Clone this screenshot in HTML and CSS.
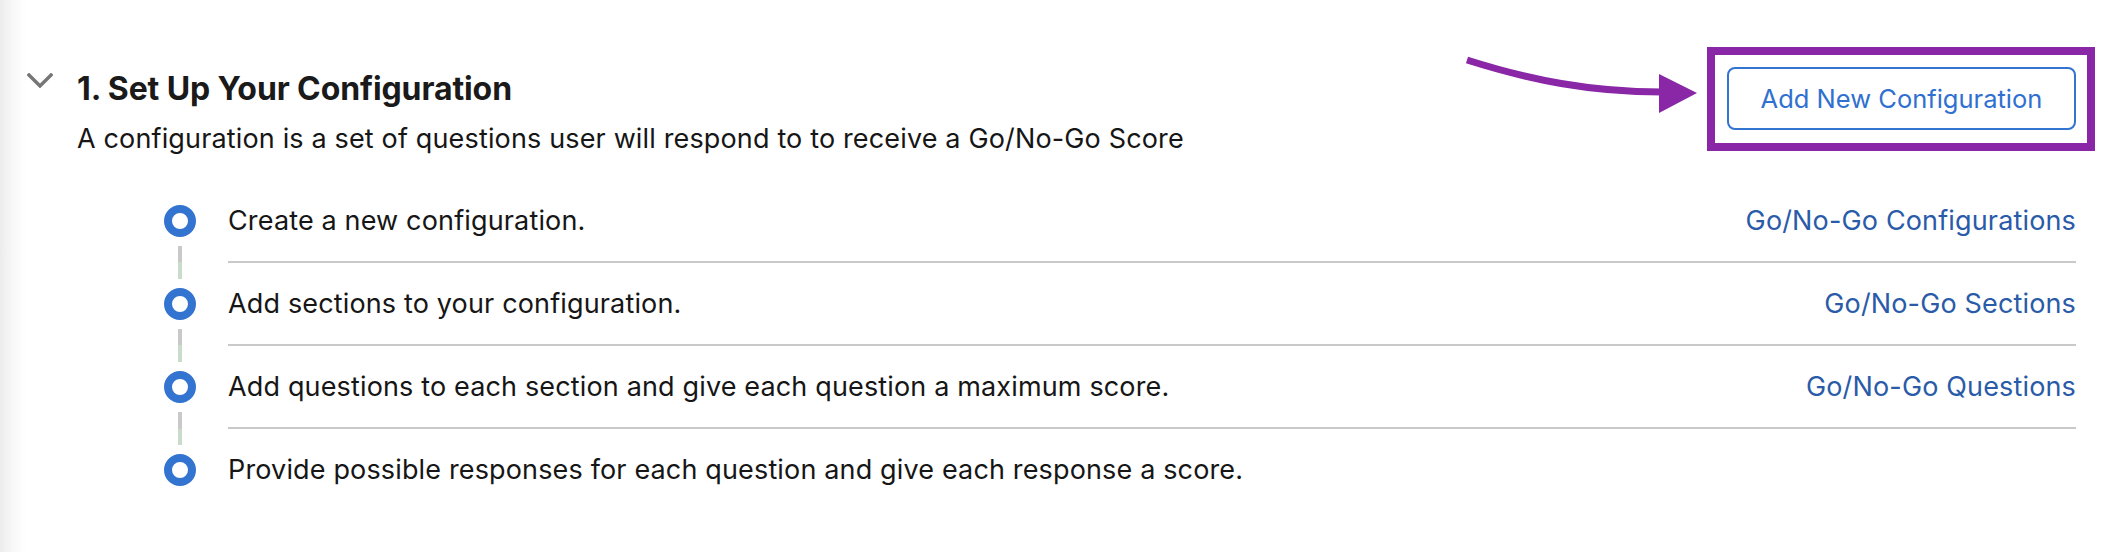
FILE: index.html
```html
<!DOCTYPE html>
<html lang="en">
<head>
<meta charset="utf-8">
<title>Set Up Your Configuration</title>
<link rel="stylesheet" href="styles.css">
</head>
<body>
<section class="section">
  <header class="header">
    <svg class="chevron" width="26" height="15" viewBox="0 0 26 15" aria-hidden="true">
      <polyline points="2,2 13,13 24,2" fill="none" stroke="#767676" stroke-width="3.4" stroke-linecap="square" stroke-linejoin="miter"/>
    </svg>
    <div class="titles">
      <h1 class="title">1. Set Up Your Configuration</h1>
      <p class="subtitle">A configuration is a set of questions user will respond to to receive a Go/No-Go Score</p>
    </div>
    <div class="action">
      <svg class="arrow" width="240" height="70" viewBox="0 0 240 70" aria-hidden="true">
        <path d="M7 10 C70 30, 130 42, 202 42" fill="none" stroke="#8a27a6" stroke-width="7"/>
        <polygon points="199,24 199,63 237,43" fill="#8a27a6"/>
      </svg>
      <button class="btn" type="button">Add New Configuration</button>
    </div>
  </header>
  <ol class="steps">
    <li class="step">
      <div class="marker"><span class="dot"></span><span class="connector"></span></div>
      <div class="step-body"><span>Create a new configuration.</span><a class="link" href="#">Go/No-Go Configurations</a></div>
    </li>
    <li class="step">
      <div class="marker"><span class="dot"></span><span class="connector"></span></div>
      <div class="step-body"><span>Add sections to your configuration.</span><a class="link" href="#">Go/No-Go Sections</a></div>
    </li>
    <li class="step">
      <div class="marker"><span class="dot"></span><span class="connector"></span></div>
      <div class="step-body"><span>Add questions to each section and give each question a maximum score.</span><a class="link" href="#">Go/No-Go Questions</a></div>
    </li>
    <li class="step last">
      <div class="marker"><span class="dot"></span></div>
      <div class="step-body"><span>Provide possible responses for each question and give each response a score.</span></div>
    </li>
  </ol>
</section>
</body>
</html>
```

FILE: styles.css
```css
html, body {
  margin: 0;
  padding: 0;
}
body {
  width: 2104px;
  height: 552px;
  overflow: hidden;
  background: linear-gradient(to right, #ececec 0px, #f7f7f7 12px, #ffffff 26px);
  font-family: Inter, "Noto Sans", "Liberation Sans", sans-serif;
  color: #161616;
}
.section {
  padding: 67px 28px 0 27px;
}
.header {
  display: flex;
  align-items: flex-start;
}
.chevron {
  display: block;
  flex: none;
  margin-top: 6px;
  margin-right: 24px;
}
.titles {
  flex: 1;
  margin-top: 2px;
}
.title {
  margin: 0;
  font-size: 32px;
  line-height: 40px;
  font-weight: 700;
  color: #1a1a1a;
  letter-spacing: -0.1px;
}
.subtitle {
  margin: 13px 0 0;
  font-size: 27px;
  line-height: 34px;
  font-weight: 400;
  letter-spacing: 0.15px;
}
.action {
  position: relative;
  flex: none;
}
.action::after {
  content: "";
  position: absolute;
  inset: -20px -19px -21px -20px;
  border: 8px solid #8a27a6;
  pointer-events: none;
}
.arrow {
  position: absolute;
  left: -267px;
  top: -17px;
  display: block;
}
.btn {
  display: block;
  width: 349px;
  height: 63px;
  border: 2px solid #3274d0;
  border-radius: 8px;
  background: #fff;
  color: #2f70d0;
  font-family: inherit;
  font-size: 25.5px;
  line-height: 1;
  padding: 0;
  cursor: pointer;
}
.steps {
  list-style: none;
  margin: 24px 0 0 137px;
  padding: 0;
}
.step {
  display: grid;
  grid-template-columns: 32px 1fr;
  column-gap: 32px;
}
.marker {
  display: flex;
  flex-direction: column;
  align-items: center;
  padding-top: 25px;
}
.dot {
  display: block;
  width: 32px;
  height: 32px;
  box-sizing: border-box;
  border: 8px solid #3274d0;
  border-radius: 50%;
  background: #fff;
}
.connector {
  display: block;
  width: 4px;
  height: 33px;
  margin: 9px 0 -16px;
  background: linear-gradient(#c9c9c9 50%, #c8dcc9 50%);
}
.step-body {
  display: flex;
  justify-content: space-between;
  align-items: center;
  height: 81px;
  border-bottom: 2px solid #c9c9c9;
  font-size: 27px;
  line-height: 34px;
  letter-spacing: 0.15px;
}
.step.last .step-body {
  border-bottom: none;
}
.link {
  color: #2a5ba8;
  text-decoration: none;
}
```
